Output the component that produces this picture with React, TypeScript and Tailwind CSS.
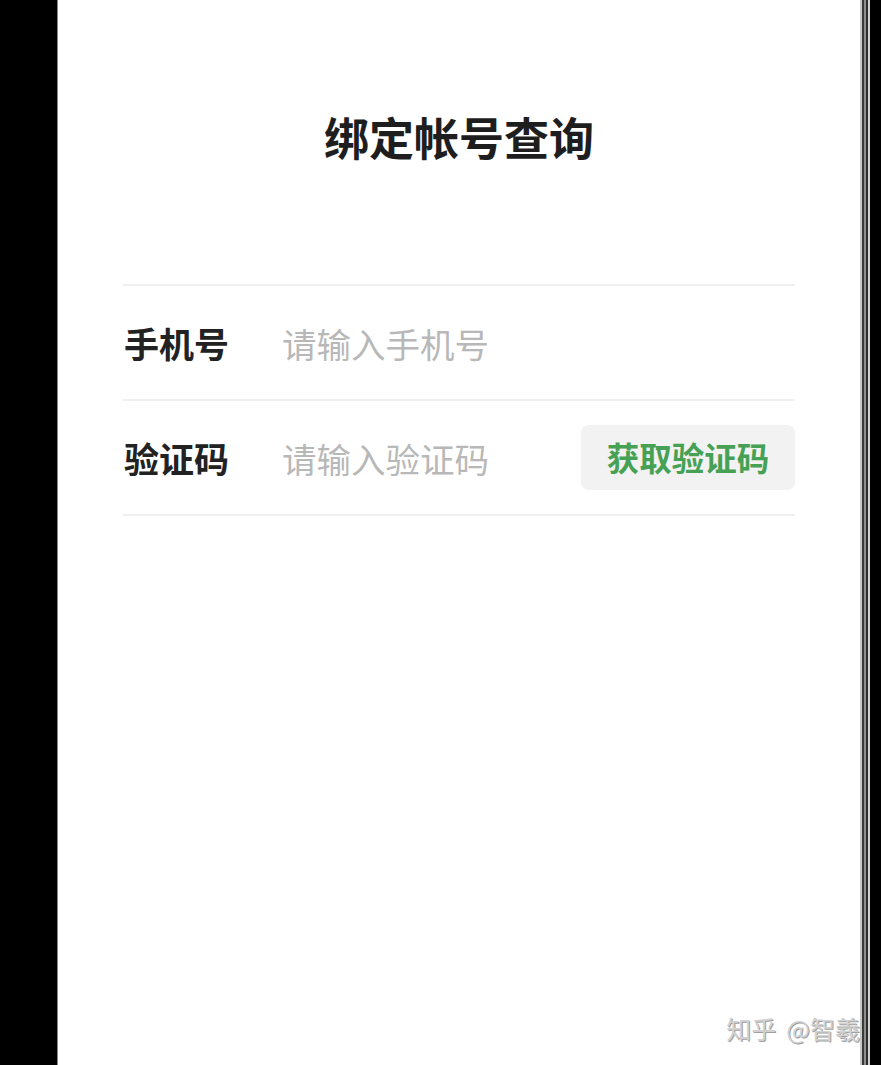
const FONT = "font-['Noto_Sans_CJK_SC','Noto_Sans',sans-serif]";

interface FieldRowProps {
  label: string;
  placeholder: string;
  action?: string;
}

function FieldRow({ label, placeholder, action }: FieldRowProps) {
  return (
    <div className="flex h-[115px] items-center border-b-2 border-[#f0f0f0]">
      <span className="w-[159px] shrink-0 pl-px text-[35px] font-bold leading-none text-[#222]">
        {label}
      </span>
      <input
        type="text"
        size={1}
        placeholder={placeholder}
        className={`w-0 min-w-0 flex-1 bg-transparent text-[34.5px] leading-none text-[#222] outline-none placeholder:text-[#b8b8b8] ${FONT}`}
      />
      {action && (
        <button
          type="button"
          className="flex h-[65px] w-[214px] shrink-0 items-center justify-center rounded-[8px] bg-[#f2f2f2] text-[32.5px] font-bold leading-none text-[#46a155]"
        >
          {action}
        </button>
      )}
    </div>
  );
}

export default function App() {
  return (
    <div className={`flex h-[1065px] w-full overflow-hidden bg-black ${FONT}`}>
      {/* left bezel */}
      <div className="w-[57px] shrink-0 bg-black" />
      <div className="w-px shrink-0 bg-[#8a8a8a]" />

      {/* screen */}
      <div className="relative w-[802px] min-w-0 shrink-0 bg-white px-[65px]">
        <h1 className="pt-[114px] text-center text-[45px] font-bold leading-[45px] text-[#1e1e1e]">
          绑定帐号查询
        </h1>

        <div className="mt-[125px] border-t-2 border-[#f0f0f0]">
          <FieldRow label="手机号" placeholder="请输入手机号" />
          <FieldRow label="验证码" placeholder="请输入验证码" action="获取验证码" />
        </div>

        {/* watermark */}
        <div className="absolute right-0 top-[1011px] flex gap-[10px] whitespace-nowrap text-[25px] leading-[34px] text-[#d2d2d2] [text-shadow:1px_1px_0_#a0a0a0]">
          <span>知乎</span>
          <span>@智羲</span>
        </div>
      </div>

      {/* right bezel */}
      <div className="flex shrink-0">
        <div className="w-[2px] bg-[#c8c8c8]" />
        <div className="w-[2px] bg-[#3a3a3a]" />
        <div className="w-[2px] bg-[#8c8c8c]" />
        <div className="w-[2px] bg-[#2e2e2e]" />
        <div className="w-[2px] bg-[#d0d0d0]" />
      </div>
      <div className="w-[11px] shrink-0 bg-black" />
    </div>
  );
}
